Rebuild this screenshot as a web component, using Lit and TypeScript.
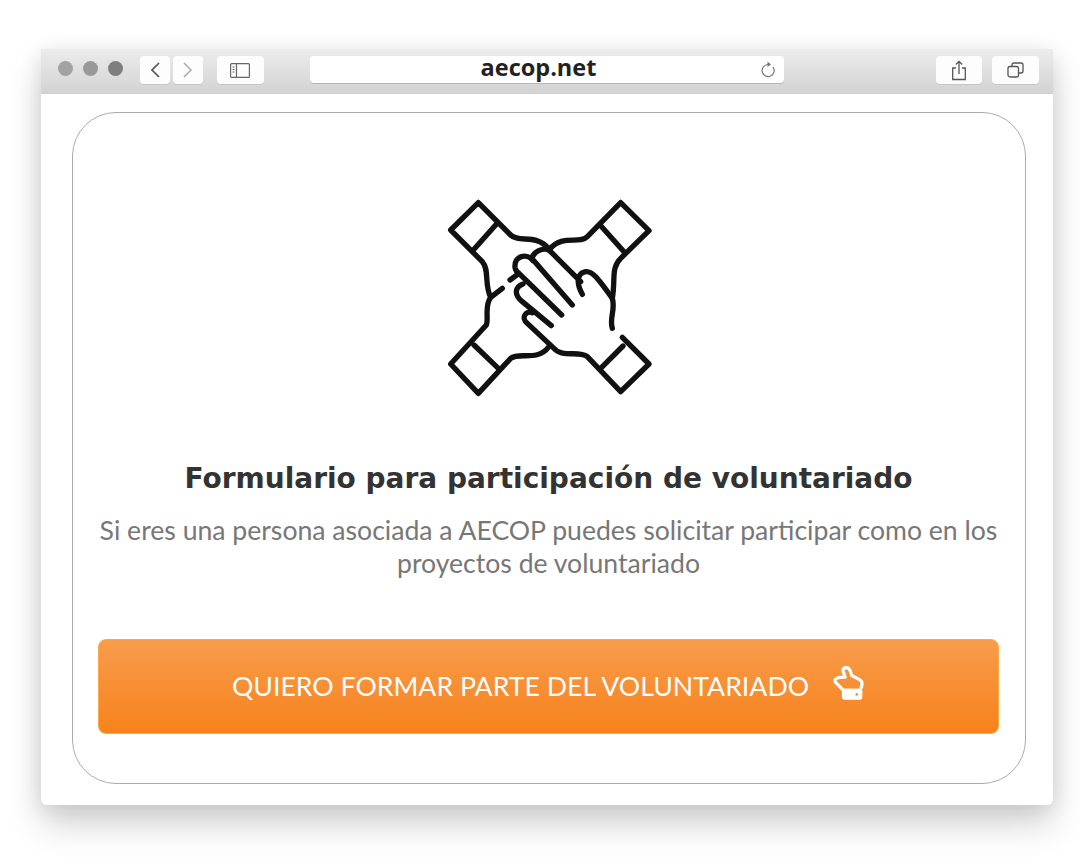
import { LitElement, html, css } from "lit";
import { customElement } from "lit/decorators.js";

@customElement("app-root")
export class AppRoot extends LitElement {
  static styles = css`
    :host { display: block; width: 1080px; height: 863px; background: #fff; overflow: hidden; box-sizing: border-box; padding: 49px 27px 58px 41px; }
    .window { height: 756px; background: #fff; border-radius: 0 0 6px 6px; box-shadow: 0 20px 34px rgba(0,0,0,.17), 0 3px 22px rgba(0,0,0,.1); display: flex; flex-direction: column; }
    .bar { height: 45px; box-sizing: border-box; background: linear-gradient(#ececec, #d3d3d3); border-bottom: 1px solid #cfcfcf; display: flex; align-items: flex-start; padding: 7px 14px 0 17px; }
    .dots { display: flex; gap: 10px; margin-top: 5px; margin-right: 17px; }
    .dot { width: 15px; height: 15px; border-radius: 50%; background: #a2a2a2; }
    .dot.b { background: #999; }
    .dot.c { background: #7e7e7e; }
    .btn { height: 28px; background: #fdfdfd; border-radius: 4px; display: flex; align-items: center; justify-content: center; box-shadow: 0 1px 0 #c6c6c6; }
    .nav { width: 30px; margin-right: 3px; }
    .side { width: 47px; margin-left: 11px; }
    .addr { width: 475px; height: 27px; margin-left: 46px; position: relative; background: #fff; border-radius: 4px; box-shadow: 0 1px 0 #b5b5b5; display: flex; align-items: center; justify-content: center; font: 700 23.5px/27px "Open Sans", sans-serif; color: #222; }
    .addr span { margin-right: 17px; margin-top: -5px; }
    .reload { position: absolute; right: 9px; top: 4px; }
    .share { width: 46px; margin-left: 152px; }
    .tabs { width: 47px; margin-left: 10px; }
    svg { display: block; fill: none; }
    .card { margin: 18px 27px 0 31px; height: 672px; box-sizing: border-box; border: 1px solid #ababab; border-radius: 44px; padding: 77px 26px 0 25px; display: flex; flex-direction: column; align-items: center; text-align: center; }
    h1 { margin: 54px 0 0; font: 700 28px/40px "DejaVu Sans", "Liberation Sans", sans-serif; color: #333; white-space: nowrap; }
    p { margin: 15px 0 0; font: 400 26.6px/33px Lato, "Liberation Sans", sans-serif; color: #777; width: 100%; }
    .cta { margin-top: 59px; width: 100%; height: 95px; box-sizing: border-box; border: 1px solid #fbab45; border-radius: 8px; background: linear-gradient(#f89c4c, #f7821b); color: #fff; display: flex; align-items: center; justify-content: center; gap: 23px; font: 400 26.7px/1 Lato, "Liberation Sans", sans-serif; }
    .pointer { margin-top: -9px; }
  `;

  render() {
    return html`
      <div class="window">
        <div class="bar">
          <div class="dots"><i class="dot"></i><i class="dot b"></i><i class="dot c"></i></div>
          <div class="btn nav"><svg width="12" height="18" viewBox="0 0 12 18" stroke="#555" stroke-width="1.7"><path d="M10 2 3 9l7 7"/></svg></div>
          <div class="btn nav"><svg width="12" height="18" viewBox="0 0 12 18" stroke="#aaa" stroke-width="1.5"><path d="M2 2l7 7-7 7"/></svg></div>
          <div class="btn side"><svg width="20" height="15" viewBox="0 0 20 15" stroke="#666" stroke-width="1.2"><rect x=".6" y=".6" width="18.8" height="13.8" rx="1"/><path d="M6.5 .6v13.8M2.5 4h2M2.5 6.5h2M2.5 9h2"/></svg></div>
          <div class="addr"><span>aecop.net</span>
            <svg class="reload" width="16" height="18" viewBox="0 0 16 18" stroke="#777" stroke-width="1.2"><path d="M9 4.500a6 6 0 1 0 5 2.500"/><path d="M8.500 1.500 12 4.500 8.500 7z" fill="#777" stroke="none"/></svg>
          </div>
          <div class="btn share"><svg width="16" height="21" viewBox="0 0 16 21" stroke="#555" stroke-width="1.3"><path d="M5 8H1.700v11.500h12.600V8H11M8 14V1.500M4.800 4.500 8 1.300l3.200 3.200"/></svg></div>
          <div class="btn tabs"><svg width="17" height="16" viewBox="0 0 17 16" stroke="#555" stroke-width="1.3"><rect x="1" y="4.500" width="10.500" height="10.500" rx="2"/><path d="M5 4.500V3a2 2 0 0 1 2-2h7a2 2 0 0 1 2 2v6a2 2 0 0 1-2 2h-2.500"/></svg></div>
        </div>
        <div class="card">
          <svg width="220" height="215" viewBox="0 0 660 645" stroke="#111" stroke-width="16" stroke-linecap="round" stroke-linejoin="round">
            <path d="M172 103 105 178M118 38 35 120 130 215C152 240 135 282 155 322L190 295M155 322C135 350 150 385 142 405L35 522 118 610 215 505C240 485 295 515 328 472M118 38 215 135C240 160 290 130 328 175"/>
            <path d="M105 465 178 535"/>
            <path d="M488 110 555 185M545 38 630 122 545 205C515 235 530 270 520 325C530 360 510 385 520 415M545 38 445 140C420 165 370 130 330 180"/>
            <path d="M330 180 425 275M430 313C412 280 412 250 440 245C460 243 475 262 520 325"/>
            <path d="M330 180C310 172 285 185 278 205L400 345M282 212C265 190 225 195 228 232C230 245 240 250 240 250L368 375M240 250 213 270M252 282C230 290 222 312 250 335L337 407M280 368C260 360 245 385 265 400L345 475C370 505 420 480 445 500L545 605 630 522 550 442"/>
            <path d="M485 535 552 468"/>
          </svg>
          <h1>Formulario para participación de voluntariado</h1>
          <p>Si eres una persona asociada a AECOP puedes solicitar participar como en los proyectos de voluntariado</p>
          <div class="cta">
            <span>QUIERO FORMAR PARTE DEL VOLUNTARIADO</span>
            <svg class="pointer" width="33" height="37" viewBox="155 100 100 112" stroke="#fff" stroke-width="10" stroke-linejoin="round" stroke-linecap="round"><path d="M190 180 165 155C160 145 170 140 195 140L188 120C190 108 205 108 210 120L215 135 240 148C250 155 245 170 240 180Z"/><rect x="190" y="180" width="52" height="23" rx="2" fill="#fff"/><circle cx="230" cy="192" r="4" fill="#f7921f" stroke="none"/></svg>
          </div>
        </div>
      </div>
    `;
  }
}
